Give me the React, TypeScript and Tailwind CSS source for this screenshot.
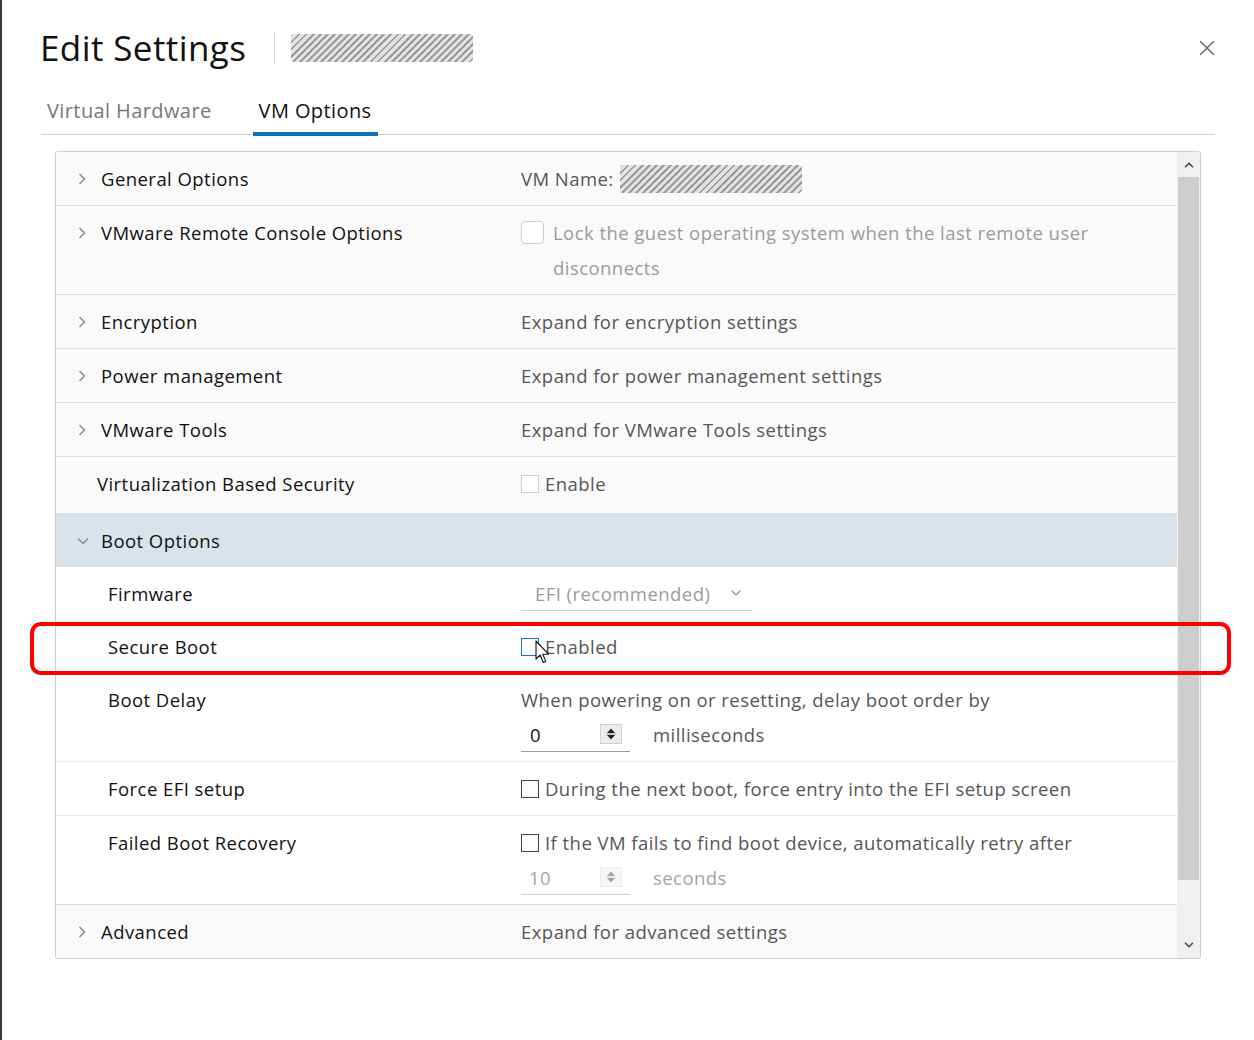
import { ChevronDown, ChevronUp, X } from "lucide-react";
import type { ReactNode } from "react";

const hatch =
  "bg-[repeating-linear-gradient(135deg,#9a9a9a_0px,#9a9a9a_2px,#e2e2e2_2px,#e2e2e2_5px)]";

function Caret({ down }: { down?: boolean }) {
  return down ? (
    <svg className="mr-[12px]" width="12" height="8" viewBox="0 0 12 8">
      <path d="M1 1.5 L6 6.5 L11 1.5" fill="none" stroke="#8c8c8c" strokeWidth="1.5" />
    </svg>
  ) : (
    <svg className="mr-[15px] ml-[1px]" width="8" height="12" viewBox="0 0 8 12">
      <path d="M1.5 1 L6.5 6 L1.5 11" fill="none" stroke="#8c8c8c" strokeWidth="1.5" />
    </svg>
  );
}

function Row({
  label,
  chevron,
  indent = "pl-[21px]",
  children,
  className = "",
}: {
  label: string;
  chevron?: "right" | "down";
  indent?: string;
  children?: ReactNode;
  className?: string;
}) {
  return (
    <div className={"grid grid-cols-[465px_1fr] py-[9px] tracking-[0.45px] " + className}>
      <div className={"flex h-[35px] items-center " + indent}>
        {chevron === "right" ? <Caret /> : chevron === "down" ? <Caret down /> : null}
        <span className="text-[18.5px] text-[#111]">{label}</span>
      </div>
      <div className="text-[18.5px] leading-[35px] text-[#565656]">{children}</div>
    </div>
  );
}

function Box({ kind }: { kind: "light" | "dark" | "blue" }) {
  const cls =
    kind === "dark"
      ? "border-[#444]"
      : kind === "blue"
        ? "border-[#1a73c9]"
        : "border-[#cfcfcf] bg-white";
  return <span className={"inline-block h-[18px] w-[18px] shrink-0 border-[1.5px] " + cls} />;
}

function Spinner({ faded }: { faded?: boolean }) {
  return (
    <span
      className={
        "flex h-[20px] w-[22px] flex-col items-center justify-center border border-[#d0d0d0] bg-[#ececec] " +
        (faded ? "opacity-40" : "")
      }
    >
      <svg width="10" height="14" viewBox="0 0 10 14">
        <path d="M1 6 L5 1.5 L9 6 Z" fill="#222" />
        <line x1="0" y1="7" x2="10" y2="7" stroke="#999" strokeWidth="0.8" />
        <path d="M1 8 L5 12.5 L9 8 Z" fill="#222" />
      </svg>
    </span>
  );
}

export default function App() {
  return (
    <div
      className="relative h-[1040px] w-[1254px] overflow-hidden border-l-[2px] border-[#3a3a3a] bg-white"
      style={{ fontFamily: "'Open Sans', 'Noto Sans', sans-serif" }}
    >
      {/* header */}
      <div className="flex items-center pl-[38px] pr-[34px] pt-[26px]">
        <h1 className="text-[35px] leading-[44px] tracking-[0.4px] text-[#111]">Edit Settings</h1>
        <span className="ml-[28px] mr-[16px] h-[32px] w-px bg-[#d4d4d4]" />
        <span className={"h-[28px] w-[182px] rounded-[3px] " + hatch} />
        <X className="ml-auto h-[26px] w-[26px] text-[#707070]" strokeWidth={1.4} />
      </div>

      {/* tabs */}
      <div className="ml-[39px] mr-[39px] mt-[27px] flex gap-[41px] border-b-[1.5px] border-[#cfcfcf] pl-[6px] tracking-[0.4px]">
        <div className="pb-[9px] text-[20px] leading-[28px] text-[#777]">Virtual Hardware</div>
        <div className="-mb-[1.5px] border-b-[4px] border-[#0d74b6] px-[6px] pb-[6px] text-[20px] leading-[28px] text-[#111]">
          VM Options
        </div>
      </div>

      {/* panel */}
      <div className="ml-[53px] mt-[16px] flex h-[808px] w-[1146px] overflow-hidden rounded-[3px] border-[1.5px] border-[#cccccc]">
        <div className="flex flex-1 flex-col">
          <Row label="General Options" chevron="right" className="border-b-[1.5px] border-[#e0e0e0] bg-[#fafafa]">
            <span className="flex h-[35px] items-center gap-[6px]">
              VM Name: <span className={"h-[28px] w-[182px] rounded-[3px] " + hatch} />
            </span>
          </Row>
          <Row label="VMware Remote Console Options" chevron="right" className="border-b-[1.5px] border-[#e0e0e0] bg-[#fafafa]">
            <div className="flex text-[#9b9b9b]">
              <span className="mr-[9px] mt-[6px] inline-block h-[23px] w-[23px] shrink-0 rounded-[4px] border-[1.5px] border-[#cfcfcf] bg-white" />
              <span>Lock the guest operating system when the last remote user</span>
            </div>
            <div className="pl-[32px] text-[#9b9b9b]">disconnects</div>
          </Row>
          <Row label="Encryption" chevron="right" className="border-b-[1.5px] border-[#e0e0e0] bg-[#fafafa]">
            Expand for encryption settings
          </Row>
          <Row label="Power management" chevron="right" className="border-b-[1.5px] border-[#e0e0e0] bg-[#fafafa]">
            Expand for power management settings
          </Row>
          <Row label="VMware Tools" chevron="right" className="border-b-[1.5px] border-[#e0e0e0] bg-[#fafafa]">
            Expand for VMware Tools settings
          </Row>
          <Row label="Virtualization Based Security" indent="pl-[41px]" className="h-[62px] border-b-[1.5px] border-[#e0e0e0] bg-[#fafafa]">
            <span className="flex h-[35px] items-center gap-[6px]">
              <Box kind="light" /> Enable
            </span>
          </Row>
          <Row label="Boot Options" chevron="down" className="bg-[#dae3ea]" />
          <Row label="Firmware" indent="pl-[52px]" className="bg-white">
            <span className="flex h-[35px] w-[231px] items-center justify-between border-b-[1.5px] border-[#cfcfcf] pl-[14px] pr-[8px] text-[#9b9b9b]">
              EFI (recommended)
              <ChevronDown className="h-[16px] w-[16px] text-[#8c8c8c]" strokeWidth={1.6} />
            </span>
          </Row>
          <Row label="Secure Boot" indent="pl-[52px]" className="bg-white">
            <span className="flex h-[35px] items-center gap-[6px]">
              <Box kind="blue" /> Enabled
            </span>
          </Row>
          <Row label="Boot Delay" indent="pl-[52px]" className="border-b-[1.5px] border-[#e8e8e8] bg-white">
            <div>When powering on or resetting, delay boot order by</div>
            <div className="flex items-center">
              <span className="flex h-[35px] w-[109px] items-center justify-between border-b-[1.5px] border-[#9a9a9a] pl-[9px] pr-[8px] text-[#111]">
                0
                <Spinner />
              </span>
              <span className="ml-[23px]">milliseconds</span>
            </div>
          </Row>
          <Row label="Force EFI setup" indent="pl-[52px]" className="h-[55px] border-b-[1.5px] border-[#e8e8e8] bg-white">
            <span className="flex h-[35px] items-center gap-[6px]">
              <Box kind="dark" /> During the next boot, force entry into the EFI setup screen
            </span>
          </Row>
          <Row label="Failed Boot Recovery" indent="pl-[52px]" className="border-b-[1.5px] border-[#dcdcdc] bg-white">
            <span className="flex h-[35px] items-center gap-[6px]">
              <Box kind="dark" /> If the VM fails to find boot device, automatically retry after
            </span>
            <div className="flex items-center text-[#a5a5a5]">
              <span className="flex h-[35px] w-[109px] items-center justify-between border-b-[1.5px] border-[#cfcfcf] pl-[8px] pr-[8px]">
                10
                <Spinner faded />
              </span>
              <span className="ml-[23px]">seconds</span>
            </div>
          </Row>
          <Row label="Advanced" chevron="right" className="flex-1 bg-[#fafafa]">
            Expand for advanced settings
          </Row>
        </div>

        {/* scrollbar */}
        <div className="flex w-[23px] flex-col bg-[#f0f0f0]">
          <div className="flex h-[25px] items-center justify-center">
            <ChevronUp className="h-[14px] w-[14px] text-[#505050]" strokeWidth={3} />
          </div>
          <div className="mx-[1px] h-[703px] bg-[#cdcdcd]" />
          <div className="flex flex-1 items-end justify-center pb-[6px]">
            <ChevronDown className="h-[14px] w-[14px] text-[#505050]" strokeWidth={3} />
          </div>
        </div>
      </div>

      {/* highlight overlay */}
      <div className="absolute left-[28px] top-[622px] h-[53px] w-[1201px] rounded-[11px] border-[4px] border-[#ff0000]" />

      {/* mouse pointer */}
      <svg className="absolute left-[533px] top-[640px]" width="16" height="25" viewBox="0 0 16 25">
        <path
          d="M1 1 L1 19 L5.2 15 L8.2 22.5 L10.8 21.4 L7.8 14.2 L13.5 14.2 Z"
          fill="white"
          stroke="#111"
          strokeWidth="1.1"
          strokeLinejoin="round"
        />
      </svg>
    </div>
  );
}
